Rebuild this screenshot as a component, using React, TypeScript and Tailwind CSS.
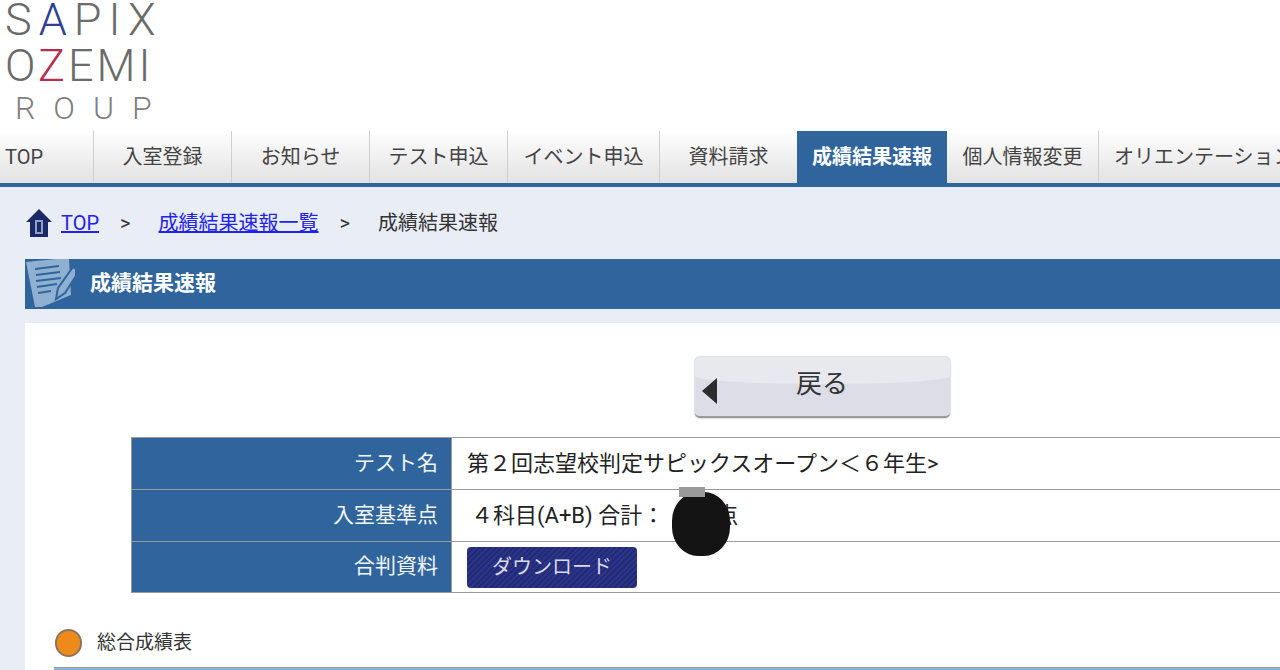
const font = "font-['Roboto','Noto_Sans_CJK_JP',sans-serif]";

const navItems = [
  { label: "TOP", width: "w-[94px]", align: "justify-start pl-[5px]" },
  { label: "入室登録", width: "w-[138px]" },
  { label: "お知らせ", width: "w-[138px]" },
  { label: "テスト申込", width: "w-[138px]" },
  { label: "イベント申込", width: "w-[152px]" },
  { label: "資料請求", width: "w-[138px]" },
  { label: "成績結果速報", width: "w-[150px]", active: true },
  { label: "個人情報変更", width: "w-[152px]" },
  { label: "オリエンテーション", width: "w-[200px]", align: "justify-start pl-[15px]" },
];

function HomeIcon() {
  return (
    <svg width="28" height="30" viewBox="0 0 28 30" className="shrink-0">
      <path d="M14 1 L27 14 L23 14 L23 29 L5 29 L5 14 L1 14 Z" fill="#1b2a66" />
      <rect x="10" y="12" width="8" height="14" fill="#8fa0c8" />
      <rect x="12" y="14" width="4" height="10" fill="#1b2a66" />
    </svg>
  );
}

function NoteIcon() {
  return (
    <svg width="50" height="50" viewBox="0 0 50 50" className="shrink-0">
      <path d="M1 3 L31 0 L44 0 L46 36 L17 48 L10 48 Z" fill="#8fb0d0" />
      <g stroke="#2f659c" strokeWidth="2">
        <path d="M10 10 L34 7" />
        <path d="M11 16 L35 13" />
        <path d="M11 22 L36 19" />
        <path d="M12 28 L32 25" />
        <path d="M13 34 L26 32" />
      </g>
      <path d="M48 8 L54 12 L40 34 L31 40 L33 29 Z" fill="#8fb0d0" stroke="#2f659c" strokeWidth="2" />
    </svg>
  );
}

function Row({ label, children }: { label: string; children: React.ReactNode }) {
  return (
    <div className="flex h-[52px] border-b border-[#9a9a9a] last:h-[51px]">
      <div className="w-[320px] shrink-0 bg-[#2f659c] border-r border-[#9a9a9a] flex items-center justify-end pr-[13px] text-[21px] text-[#f2f5f9]">
        {label}
      </div>
      <div className="flex-1 bg-white flex items-center pl-[15px] text-[22px] text-[#222] whitespace-nowrap">
        {children}
      </div>
    </div>
  );
}

export default function App() {
  return (
    <div className={`${font} w-[1280px] h-[670px] overflow-hidden bg-[#e9edf6]`}>
      {/* logo */}
      <div className="h-[131px] bg-white pl-[5px] font-['Roboto',sans-serif] font-light text-[#6b6b6b] overflow-hidden">
        <div className="h-[42px] pt-[1px] text-[45px] leading-[38px] tracking-[7px] whitespace-nowrap">
          S<span className="text-[#2f3f95]">A</span>PIX
        </div>
        <div className="h-[42px] pt-[5px] text-[45px] leading-[38px] tracking-[3px] whitespace-nowrap">
          O<span className="text-[#b3304d]">Z</span>EMI
        </div>
        <div className="mt-[9px] pl-[10px] text-[32px] leading-[30px] tracking-[18px] text-[#808080] whitespace-nowrap">ROUP</div>
      </div>

      {/* nav */}
      <div className="flex h-[56px] border-b-4 border-[#2f659c] bg-gradient-to-b from-white via-[#f0f0f0] to-[#e2e2e2] whitespace-nowrap overflow-hidden">
        {navItems.map(item => (
          <div
            key={item.label}
            className={`${item.width} shrink-0 flex items-center text-[20px] ${item.align ?? "justify-center"} ${
              item.active
                ? "bg-[#2f659c] text-white font-bold -ml-px"
                : "border-r border-[#cfcfcf] text-[#444]"
            }`}
          >
            {item.label}
          </div>
        ))}
      </div>

      {/* breadcrumb */}
      <div className="flex items-center h-[72px] pl-[25px] text-[20px] text-[#333] whitespace-nowrap">
        <HomeIcon />
        <a href="#" className="ml-[8px] text-[#2222ee] underline">TOP</a>
        <span className="ml-[21px]">&gt;</span>
        <a href="#" className="ml-[28px] text-[#2222ee] underline">成績結果速報一覧</a>
        <span className="ml-[21px]">&gt;</span>
        <span className="ml-[28px]">成績結果速報</span>
      </div>

      {/* title bar */}
      <div className="ml-[25px] h-[50px] bg-[#2f659c] flex items-center overflow-hidden">
        <div className="w-[65px] shrink-0 overflow-hidden"><NoteIcon /></div>
        <h1 className="text-[21px] font-bold text-white">成績結果速報</h1>
      </div>

      {/* panel */}
      <div className="ml-[25px] mt-[14px] bg-white h-[400px] pt-[34px]">
        <div className="relative ml-[670px] w-[255px] h-[61px] rounded-[5px] border-b-2 border-[#9a9a9a] bg-[#dcdde6] shadow-[0_0_2px_#999] flex items-center justify-center text-[26px] text-[#333] overflow-hidden">
          <div className="absolute inset-x-0 top-0 h-[27px] bg-[#e8e9ef] rounded-b-[50%_8px]" />
          <span className="absolute left-[7px] top-[21px] border-y-[13px] border-y-transparent border-r-[15px] border-r-[#2c2c2c]" />
          <span className="relative -mt-[5px] -ml-[1px]">戻る</span>
        </div>

        <div className="ml-[106px] mt-[19px] border-t border-l border-[#9a9a9a]">
          <Row label="テスト名">第２回志望校判定サピックスオープン＜６年生&gt;</Row>
          <Row label="入室基準点">
            <span className="relative pl-[4px]">
              ４科目(A+B) 合計：
              <span className="ml-[52px]">点</span>
              <span className="absolute left-[205px] -top-[7px] w-[58px] h-[64px] rounded-[45%] bg-[#141414]" />
              <span className="absolute left-[212px] -top-[12px] w-[26px] h-[10px] bg-[#9a9a9a]" />
            </span>
          </Row>
          <Row label="合判資料">
            <button className="w-[170px] h-[41px] rounded-[4px] bg-[repeating-linear-gradient(135deg,#232a78_0px,#232a78_2px,#2c3488_2px,#2c3488_4px)] text-[20px] text-[#d8dbe8] flex items-center justify-center">
              ダウンロード
            </button>
          </Row>
        </div>

        <div className="flex items-center ml-[30px] mt-[35px] h-[30px]">
          <span className="w-[27px] h-[28px] rounded-full bg-[#ee8a1a] border-2 border-[#8a7560]" />
          <span className="ml-[15px] text-[19px] text-[#333]">総合成績表</span>
        </div>
        <div className="ml-[29px] mt-[9px] h-[8px] bg-[#8db4e0] border-t border-[#9a9a9a]" />
      </div>
    </div>
  );
}
